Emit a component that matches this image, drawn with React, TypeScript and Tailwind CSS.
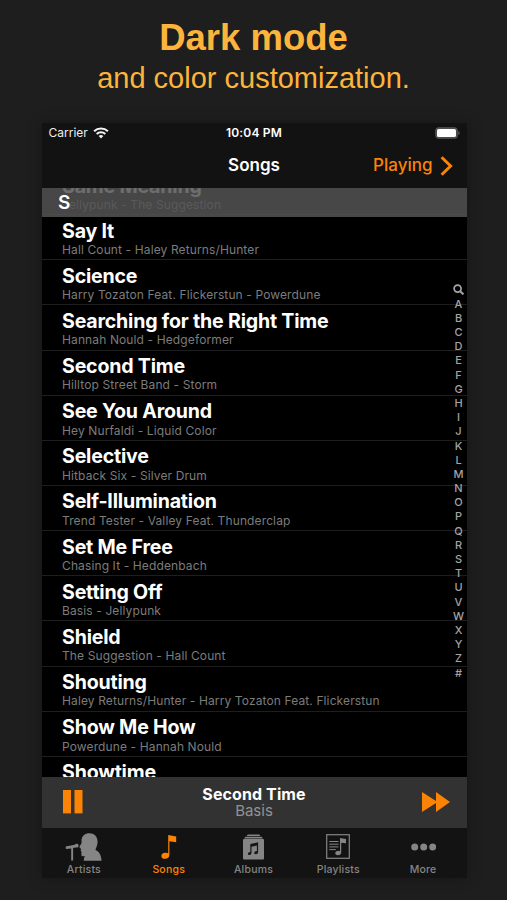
import type { ReactNode } from "react";

const songs: [string, string][] = [
  ["Same Meaning", "Jellypunk - The Suggestion"],
  ["Say It", "Hall Count - Haley Returns/Hunter"],
  ["Science", "Harry Tozaton Feat. Flickerstun - Powerdune"],
  ["Searching for the Right Time", "Hannah Nould - Hedgeformer"],
  ["Second Time", "Hilltop Street Band - Storm"],
  ["See You Around", "Hey Nurfaldi - Liquid Color"],
  ["Selective", "Hitback Six - Silver Drum"],
  ["Self-Illumination", "Trend Tester - Valley Feat. Thunderclap"],
  ["Set Me Free", "Chasing It - Heddenbach"],
  ["Setting Off", "Basis - Jellypunk"],
  ["Shield", "The Suggestion - Hall Count"],
  ["Shouting", "Haley Returns/Hunter - Harry Tozaton Feat. Flickerstun"],
  ["Show Me How", "Powerdune - Hannah Nould"],
  ["Showtime", ""],
];

function SongRow({ title, subtitle }: { title: string; subtitle: string }) {
  return (
    <li className="h-[45.15px] shrink-0 border-b border-[#1e1e1e] pl-[20.5px] pt-[3.5px] whitespace-nowrap">
      <div className="text-[19.6px] leading-6 font-[650] tracking-[-0.2px] text-white">{title}</div>
      <div className="pt-[0.4px] text-[12px] leading-[14px] tracking-[0.12px] text-[#7c7c7c]">{subtitle}</div>
    </li>
  );
}

function StatusBar() {
  return (
    <div className="grid h-5 grid-cols-[1fr_auto_1fr] items-center px-[7px] text-[12px] text-[#eeeeee]">
      <div className="flex items-center gap-[5px]">
        <span>Carrier</span>
        <svg width="16" height="12" viewBox="0 0 16 12" fill="none" stroke="#f4f4f4" strokeWidth="2">
          <path d="M1.1 4.3a10 10 0 0 1 13.8 0" />
          <path d="M3.7 7a6.2 6.2 0 0 1 8.6 0" />
          <path d="M5.7 9a3.4 3.4 0 0 1 4.6 0L8 11.4Z" fill="#f4f4f4" stroke="none" />
        </svg>
      </div>
      <span className="text-center font-semibold tracking-[0.2px] text-white">10:04 PM</span>
      <svg className="justify-self-end" width="25" height="12" viewBox="0 0 25 12">
        <rect x="0.8" y="0.8" width="21.4" height="10.4" rx="3" fill="#444" stroke="#555" strokeWidth="1.2" />
        <rect x="2" y="2" width="19" height="8" rx="1.6" fill="#fff" />
        <path d="M23.4 4v4q1.3-.6 1.3-2t-1.3-2Z" fill="#606060" />
      </svg>
    </div>
  );
}

function NavBar() {
  return (
    <div className="grid h-[45px] grid-cols-[1fr_auto_1fr] items-center px-[14px] text-[17px]">
      <span />
      <span className="font-semibold text-white">Songs</span>
      <div className="flex items-center justify-end gap-[7px] font-medium text-[#fb8306]">
        <span>Playing</span>
        <svg width="13" height="20" viewBox="0 0 13 20" fill="none" stroke="currentColor" strokeWidth="3">
          <path d="M1.6 1.2 10.6 10 1.6 18.8" />
        </svg>
      </div>
    </div>
  );
}

function IndexBar() {
  return (
    <div className="absolute top-[94.5px] right-0 flex w-4 flex-col items-center text-[11px] font-medium text-[#a4a4a4]">
      <div className="flex h-[14.17px] items-center">
        <svg width="11" height="11" viewBox="0 0 11 11" fill="none" stroke="currentColor" strokeWidth="1.7">
          <circle cx="4.6" cy="4.6" r="3.5" />
          <path d="m7.2 7.2 3.2 3.2" strokeWidth="2" />
        </svg>
      </div>
      {"ABCDEFGHIJKLMNOPQRSTUVWXYZ#".split("").map((c) => (
        <span key={c} className="h-[14.2px] leading-[15px]">{c}</span>
      ))}
    </div>
  );
}

function NowPlaying() {
  return (
    <div className="grid h-[51px] grid-cols-[1fr_auto_1fr] items-center bg-[#323232] pr-[17px] pl-[21px]">
      <svg className="-mt-px" width="28" height="24" viewBox="0 0 28 24" fill="#fb8306">
        <rect width="8" height="23.4" />
        <rect x="11.5" width="8" height="23.4" />
      </svg>
      <div className="-mt-px -ml-[4px] flex flex-col items-center">
        <span className="text-[16px] leading-[17px] font-[650] tracking-[0.1px] text-white">Second Time</span>
        <span className="text-[15px] leading-4 text-[#929292]">Basis</span>
      </div>
      <svg className="-mt-px justify-self-end" width="28" height="20" viewBox="0 0 28 20" fill="#fb8306">
        <path d="M0 0 14 9.1V0L28 10 14 20V10.9L0 20Z" />
      </svg>
    </div>
  );
}

function Tab({ label, active, children }: { label: string; active?: boolean; children: ReactNode }) {
  return (
    <div className={active ? "flex w-[84.8px] flex-col items-center pt-[4px] text-[#fb8306]" : "flex w-[84.8px] flex-col items-center pt-[4px] text-[#858585]"}>
      <div className="flex h-[30px] items-center">{children}</div>
      <span className="text-[10.5px] leading-[17px] font-medium tracking-[0.2px]">{label}</span>
    </div>
  );
}

function TabBar() {
  return (
    <div className="flex h-[50px] bg-[#131313]">
      <Tab label="Artists">
        <svg width="37" height="28" viewBox="0 0 37 28" fill="currentColor">
          <path d="M16.5 7C17 2.7 20.2.3 24.2.3c5.1 0 8.4 3.5 8.4 8.4 0 3.4-1.3 5.2-2.2 8.2 3 1.4 5.7 3.4 6.2 10.8H18.8c0-2.2.4-3.4 1.4-4.5h-2.5c-1-.1-1.4-.8-1.3-1.8v-2.8l-.9-1.3.7-1.1-.8-1c-1-.7-1.2-1-.8-1.7l2-3.5Z" />
          <path d="m.7 13.4 9-1.7c.8-1.1 3.2-1.2 3.8.2.7 1.7-.8 3.1-3.2 2.5L8.1 15.1V27.4H6.2V15.5L.9 16Z" />
        </svg>
      </Tab>
      <Tab label="Songs" active>
        <svg width="16" height="24" viewBox="0 0 16 24" fill="currentColor">
          <path d="M7.2 0 15.2 1.4V7.2L8.4 6.3V19.8Q8.2 23.7 4 23.8.4 23.8.4 20.9.5 17.9 4.1 17.7 6 17.5 7.2 18.3Z" />
        </svg>
      </Tab>
      <Tab label="Albums">
        <svg width="21" height="26" viewBox="0 0 21 26">
          <path d="M4.7.6H16.3L17.3 2H3.7ZM2.4 2.7H18.6L20 4.6H1Z" fill="currentColor" />
          <rect y="5" width="21" height="20.4" rx="1" fill="currentColor" />
          <path d="m7.3 10 7.8-1.7V18q0 2.2-2.2 2.2-1.7 0-1.7-1.3 0-1.5 2.7-1.8V11.6L8.5 12.8V19q-.1 2.1-2.1 2.1-1.6 0-1.6-1.3 0-1.4 2.5-1.7Z" fill="#171717" />
        </svg>
      </Tab>
      <Tab label="Playlists">
        <svg width="24" height="25" viewBox="0 0 24 25" fill="none">
          <rect x=".7" y=".7" width="22.6" height="23.6" stroke="currentColor" strokeWidth="1.2" />
          <path d="M3.3 7.5H12.5M3.3 10.2H12.5M3.3 12.9H12.5M3.3 15.6H9.8" stroke="currentColor" strokeWidth="1" />
          <path d="m14 4 6 .9v4.4l-4.8-.6v9.5q-.1 3-3.3 3-2.7 0-2.7-2.1.1-2.2 2.8-2.4 1 0 2 .5Z" fill="currentColor" />
        </svg>
      </Tab>
      <Tab label="More">
        <svg width="25" height="8" viewBox="0 0 25 8" fill="currentColor">
          <circle cx="3.7" cy="4" r="3.5" />
          <circle cx="12.7" cy="4" r="3.5" />
          <circle cx="21.7" cy="4" r="3.5" />
        </svg>
      </Tab>
    </div>
  );
}

export default function App() {
  return (
    <main className="h-[900px] w-[507px] overflow-hidden bg-[#1e1e1e]">
      <header className="h-[123px] pt-[17px] text-center font-['Liberation_Sans',Arial,sans-serif] text-[#fdb43c]">
        <h1 className="text-[36.5px] leading-[42px] font-bold">Dark mode</h1>
        <p className="text-[29px] leading-[38px]">and color customization.</p>
      </header>
      <section className="ml-[41.5px] h-[755px] w-[425px] bg-[#121212] font-[Inter,sans-serif] shadow-[0_0_14px_rgba(0,0,0,0.3)]">
        <StatusBar />
        <NavBar />
        <div className="relative h-[589px] overflow-hidden bg-black">
          <ul className="-mt-[18px] flex flex-col">
            {songs.map(([title, subtitle]) => (
              <SongRow key={title} title={title} subtitle={subtitle} />
            ))}
          </ul>
          <div className="absolute inset-x-0 top-0 h-[28.7px] bg-[#535353]/85 pt-[3px] pl-[16.5px] text-[19px] leading-6 font-semibold text-white">
            S
          </div>
          <IndexBar />
        </div>
        <NowPlaying />
        <TabBar />
      </section>
    </main>
  );
}
